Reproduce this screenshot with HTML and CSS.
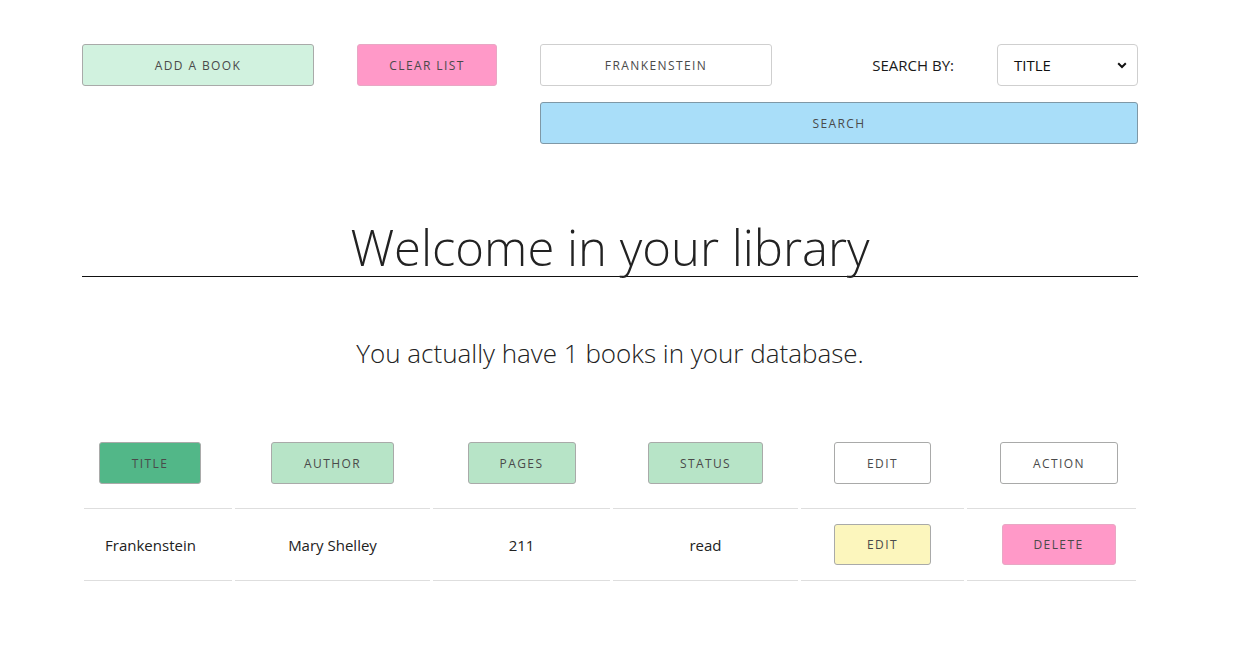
FILE: index.html
```html
<!DOCTYPE html>
<html lang="en">
<head>
<meta charset="utf-8">
<title>Library</title>
<link rel="stylesheet" href="styles.css">
</head>
<body>
<div class="page">
  <form class="toolbar">
    <button type="button" class="btn btn-add">ADD A BOOK</button>
    <button type="button" class="btn btn-clear">CLEAR LIST</button>
    <input class="search-input" type="text" value="FRANKENSTEIN">
    <label class="search-label">SEARCH BY:</label>
    <div class="select">
      <span>TITLE</span>
      <svg class="chev" width="10" height="7" viewBox="0 0 10 7"><path d="M1.2 1.3 L5 5 L8.8 1.3" fill="none" stroke="#111" stroke-width="2"/></svg>
    </div>
    <button type="button" class="btn btn-search">SEARCH</button>
  </form>

  <h1 class="title">Welcome in your library</h1>
  <p class="count">You actually have 1 books in your database.</p>

  <table class="books">
    <colgroup>
      <col class="c1"><col class="c2"><col class="c3"><col class="c4"><col class="c5"><col class="c6">
    </colgroup>
    <thead>
      <tr>
        <th class="first"><button class="btn hd hd-active">TITLE</button></th>
        <th><button class="btn hd">AUTHOR</button></th>
        <th><button class="btn hd">PAGES</button></th>
        <th><button class="btn hd">STATUS</button></th>
        <th><button class="btn hd-plain">EDIT</button></th>
        <th class="last"><button class="btn hd-plain">ACTION</button></th>
      </tr>
    </thead>
    <tbody>
      <tr>
        <td class="first">Frankenstein</td>
        <td>Mary Shelley</td>
        <td>211</td>
        <td>read</td>
        <td><button class="btn btn-edit">EDIT</button></td>
        <td class="last"><button class="btn btn-delete">DELETE</button></td>
      </tr>
    </tbody>
  </table>
</div>
</body>
</html>
```

FILE: styles.css
```css
* { box-sizing: border-box; }

body {
  margin: 0;
  background: #fff;
  font-family: "Open Sans", "Noto Sans", sans-serif;
  color: #222;
}

.page {
  width: 1056px;
  margin-left: 82px;
  padding-top: 44px;
}

.toolbar {
  display: grid;
  grid-template-columns: 232px 140px 232px 1fr 141px;
  grid-template-rows: 42px 42px;
  column-gap: 43px;
  row-gap: 16px;
  margin: 0;
}

.btn {
  font-family: "Open Sans", "Noto Sans", sans-serif;
  font-size: 12px;
  letter-spacing: 1.4px;
  color: #4a4a4a;
  border: 1px solid #a9aaa9;
  border-radius: 3px;
  height: 42px;
  padding: 0;
  cursor: pointer;
}

.btn-add { background: #d1f2df; }
.btn-clear { background: #ff99c8; border-color: #e8a7c4; }

.search-input {
  grid-column: 3;
  height: 42px;
  border: 1px solid #cfcfcf;
  border-radius: 3px;
  text-align: center;
  font-family: "Open Sans", "Noto Sans", sans-serif;
  font-size: 12px;
  letter-spacing: 1.4px;
  color: #4a4a4a;
  background: #fff;
}

.search-label {
  grid-column: 4;
  align-self: center;
  justify-self: end;
  margin-right: 0;
  font-size: 15px;
  color: #1a1a1a;
}

.select {
  grid-column: 5;
  display: flex;
  align-items: center;
  justify-content: space-between;
  padding: 0 10px 0 16px;
  border: 1px solid #cfcfcf;
  border-radius: 4px;
  font-size: 15px;
  color: #111;
}

.btn-search {
  grid-column: 3 / 6;
  grid-row: 2;
  background: #a9def9;
  border-color: #7f98a6;
}

.title {
  margin: 74px 0 0;
  text-align: center;
  font-family: "Open Sans", sans-serif;
  font-weight: 300;
  font-size: 49px;
  line-height: 58px;
  color: #222;
  border-bottom: 1px solid #111;
  padding-bottom: 0;
}

.count {
  margin: 56px 0 0;
  text-align: center;
  font-weight: 300;
  font-size: 26px;
  line-height: 40px;
  color: #222;
}

.books {
  margin-top: 57px;
  width: 1056px;
  border-collapse: separate;
  border-spacing: 3px 0;
  margin-left: -1px;
  table-layout: fixed;
}

.c1 { width: 148px; }
.c2 { width: 195px; }
.c3 { width: 177px; }
.c4 { width: 185px; }
.c5 { width: 163px; }
.c6 { width: 169px; }

.books th {
  padding: 12px 0 24px;
  text-align: center;
  font-weight: normal;
}

.books td {
  height: 73px;
  border-top: 1px solid #dedede;
  border-bottom: 1px solid #dedede;
  text-align: center;
  font-size: 15px;
  color: #222;
}

.books .first { padding-right: 16px; }
.books .last { padding-left: 15px; }

.hd { background: #b7e4c7; }
.hd-active { background: #52b788; }
.hd-plain { background: #fff; }

.books thead th:nth-child(1) .btn { width: 102px; }
.books thead th:nth-child(2) .btn { width: 123px; }
.books thead th:nth-child(3) .btn { width: 108px; }
.books thead th:nth-child(4) .btn { width: 115px; }
.books thead th:nth-child(5) .btn { width: 97px; }
.books thead th:nth-child(6) .btn { width: 118px; }

.btn-edit { background: #fcf6bd; width: 97px; height: 41px; }
.btn-delete { background: #ff99c8; border-color: #e8a7c4; width: 114px; height: 41px; }
```
